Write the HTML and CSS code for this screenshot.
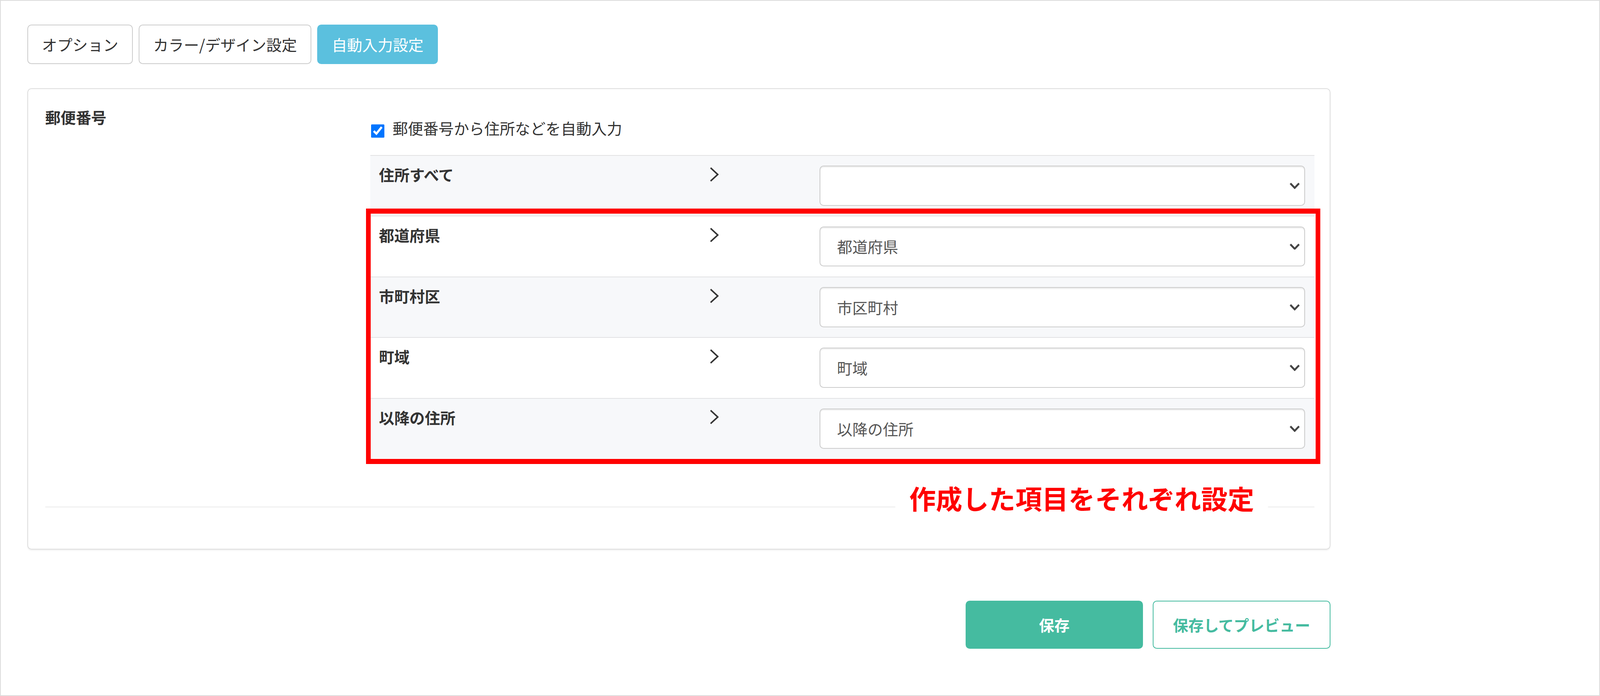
FILE: index.html
```html
<!DOCTYPE html>
<html lang="ja">
<head>
<meta charset="utf-8">
<title>自動入力設定</title>
<link rel="stylesheet" href="styles.css">
</head>
<body>
<div class="frame">
  <nav class="tabs">
    <button class="tab">オプション</button>
    <button class="tab">カラー/デザイン設定</button>
    <button class="tab tab-active">自動入力設定</button>
  </nav>

  <section class="card">
    <div class="field-label">郵便番号</div>
    <div class="field-body">
      <label class="check-line">
        <input type="checkbox" class="check" checked>
        <span>郵便番号から住所などを自動入力</span>
      </label>

      <div class="map-table">
        <div class="map-row odd">
          <div class="map-label">住所すべて</div>
          <div class="map-arrow"><svg class="chev" viewBox="0 0 9.5 14" preserveAspectRatio="none"><polyline points="1.2,1 8.2,7 1.2,13"/></svg></div>
          <div class="select-wrap">
            <select class="select"><option></option></select>
            <svg class="caret" viewBox="0 0 10.3 6" preserveAspectRatio="none"><polyline points="0.9,0.9 5.15,5 9.4,0.9"/></svg>
          </div>
        </div>

        <div class="map-group">
          <div class="map-row">
            <div class="map-label">都道府県</div>
            <div class="map-arrow"><svg class="chev" viewBox="0 0 9.5 14" preserveAspectRatio="none"><polyline points="1.2,1 8.2,7 1.2,13"/></svg></div>
            <div class="select-wrap">
              <select class="select"><option>都道府県</option></select>
              <svg class="caret" viewBox="0 0 10.3 6" preserveAspectRatio="none"><polyline points="0.9,0.9 5.15,5 9.4,0.9"/></svg>
            </div>
          </div>
          <div class="map-row odd">
            <div class="map-label">市町村区</div>
            <div class="map-arrow"><svg class="chev" viewBox="0 0 9.5 14" preserveAspectRatio="none"><polyline points="1.2,1 8.2,7 1.2,13"/></svg></div>
            <div class="select-wrap">
              <select class="select"><option>市区町村</option></select>
              <svg class="caret" viewBox="0 0 10.3 6" preserveAspectRatio="none"><polyline points="0.9,0.9 5.15,5 9.4,0.9"/></svg>
            </div>
          </div>
          <div class="map-row">
            <div class="map-label">町域</div>
            <div class="map-arrow"><svg class="chev" viewBox="0 0 9.5 14" preserveAspectRatio="none"><polyline points="1.2,1 8.2,7 1.2,13"/></svg></div>
            <div class="select-wrap">
              <select class="select"><option>町域</option></select>
              <svg class="caret" viewBox="0 0 10.3 6" preserveAspectRatio="none"><polyline points="0.9,0.9 5.15,5 9.4,0.9"/></svg>
            </div>
          </div>
          <div class="map-row odd">
            <div class="map-label">以降の住所</div>
            <div class="map-arrow"><svg class="chev" viewBox="0 0 9.5 14" preserveAspectRatio="none"><polyline points="1.2,1 8.2,7 1.2,13"/></svg></div>
            <div class="select-wrap">
              <select class="select"><option>以降の住所</option></select>
              <svg class="caret" viewBox="0 0 10.3 6" preserveAspectRatio="none"><polyline points="0.9,0.9 5.15,5 9.4,0.9"/></svg>
            </div>
          </div>
          <div class="highlight"></div>
        </div>
      </div>
    </div>

    <div class="divider">
      <span class="note">作成した項目をそれぞれ設定</span>
    </div>
  </section>

  <div class="actions">
    <button class="btn btn-save">保存</button>
    <button class="btn btn-preview">保存してプレビュー</button>
  </div>
</div>
</body>
</html>
```

FILE: styles.css
```css
/* design units: 1/1568 of the viewport width, 1/633.9 of its height */
:root {
  --hu: calc(100vw / 1568);
  --vu: calc(100vh / 633.9);
}

html {
  background: #ffffff;
  overflow: hidden;
}

body {
  margin: 0;
  font-family: "Noto Sans CJK JP", "Noto Sans", sans-serif;
  font-size: calc(15 * var(--hu));
  line-height: calc(22.5 * var(--vu));
  color: #333333;
}

.frame {
  box-sizing: border-box;
  height: 100vh;
  border-style: solid;
  border-color: #dcdcdc;
  border-width: var(--vu) var(--hu);
  padding: calc(21.8 * var(--vu)) 0 0 calc(26 * var(--hu));
}

/* tabs */
.tabs {
  display: flex;
  gap: calc(5.6 * var(--hu));
}

.tab {
  font-family: inherit;
  font-size: calc(15 * var(--hu));
  line-height: calc(22.5 * var(--vu));
  color: #333333;
  background: #ffffff;
  border-style: solid;
  border-color: #cccccc;
  border-width: var(--vu) var(--hu);
  border-radius: calc(4 * var(--hu));
  padding: calc(6 * var(--vu)) calc(13.5 * var(--hu));
  margin: 0;
}

.tab-active {
  background: #5bc0de;
  border-color: #5bc0de;
  color: #ffffff;
}

/* card */
.card {
  box-sizing: border-box;
  width: calc(1277 * var(--hu));
  margin-top: calc(22.1 * var(--vu));
  border-style: solid;
  border-color: #dddddd;
  border-width: var(--vu) var(--hu);
  border-radius: calc(4 * var(--hu));
  box-shadow: 0 var(--vu) var(--vu) rgba(0, 0, 0, 0.05);
  padding: calc(14 * var(--vu)) calc(15 * var(--hu)) calc(37.6 * var(--vu)) calc(16.8 * var(--hu));
  display: grid;
  grid-template-columns: calc(318.4 * var(--hu)) 1fr;
}

.field-label {
  font-weight: bold;
  color: #333333;
}

.field-body {
  padding-top: calc(10 * var(--vu));
}

.check-line {
  display: flex;
  align-items: flex-start;
  gap: calc(8 * var(--hu));
  padding-left: var(--hu);
}

.check {
  width: calc(13 * var(--hu));
  height: calc(13 * var(--vu));
  margin: calc(7.6 * var(--vu)) 0 0 0;
}

.map-table {
  margin-top: calc(13.4 * var(--vu));
}

.map-group {
  position: relative;
}

.map-row {
  display: grid;
  grid-template-columns: calc(323.7 * var(--hu)) calc(108.1 * var(--hu)) 1fr;
  align-items: start;
  border-top: var(--vu) solid #e2e2e4;
  padding: 0 calc(8.9 * var(--hu)) 0 calc(8.6 * var(--hu));
  background: #ffffff;
}

.map-row.odd {
  background: #f7f8fa;
}

.map-label {
  font-weight: bold;
  color: #333333;
  padding-top: calc(5.7 * var(--vu));
}

.map-arrow {
  padding-top: calc(9.9 * var(--vu));
  height: calc(14 * var(--vu));
}

.chev {
  display: block;
  width: calc(9.5 * var(--hu));
  height: calc(14 * var(--vu));
  fill: none;
  stroke: #333333;
  stroke-width: 1.4;
}

.select-wrap {
  position: relative;
  margin: calc(9 * var(--vu)) 0;
}

.select {
  appearance: none;
  -webkit-appearance: none;
  display: block;
  box-sizing: border-box;
  width: 100%;
  height: calc(36.6 * var(--vu));
  margin: 0;
  padding: 0 calc(24 * var(--hu)) 0 calc(16.4 * var(--hu));
  font-family: inherit;
  font-size: calc(15 * var(--hu));
  line-height: calc(22.5 * var(--vu));
  color: #555555;
  background: #ffffff;
  border-style: solid;
  border-color: #cccccc;
  border-width: var(--vu) var(--hu);
  border-radius: calc(4 * var(--hu));
  box-shadow: inset 0 var(--vu) var(--vu) rgba(0, 0, 0, 0.075);
}

.caret {
  position: absolute;
  right: calc(5 * var(--hu));
  top: calc(15.3 * var(--vu));
  width: calc(10.3 * var(--hu));
  height: calc(6 * var(--vu));
  fill: none;
  stroke: #444444;
  stroke-width: 1.8;
  pointer-events: none;
}

.highlight {
  position: absolute;
  top: calc(-6.4 * var(--vu));
  left: calc(-3.9 * var(--hu));
  right: calc(-6 * var(--hu));
  bottom: calc(-4.8 * var(--vu));
  border-style: solid;
  border-color: #ff0000;
  border-width: calc(4.8 * var(--vu)) calc(4.8 * var(--hu));
  pointer-events: none;
}

/* divider with annotation */
.divider {
  grid-column: 1 / -1;
  position: relative;
  height: var(--vu);
  margin-top: calc(43.6 * var(--vu));
  background: #ebebeb;
}

.note {
  position: absolute;
  left: calc(833.2 * var(--hu));
  top: calc(-23.2 * var(--vu));
  padding: 0 calc(13.6 * var(--hu));
  background: #ffffff;
  color: #ff0000;
  font-size: calc(26 * var(--hu));
  line-height: calc(31.2 * var(--vu));
  font-weight: bold;
  white-space: nowrap;
}

/* action buttons */
.actions {
  width: calc(1277 * var(--hu));
  display: flex;
  justify-content: flex-end;
  gap: calc(9.6 * var(--hu));
  margin-top: calc(46.5 * var(--vu));
}

.btn {
  box-sizing: border-box;
  width: calc(174 * var(--hu));
  height: calc(43.7 * var(--vu));
  margin: 0;
  padding: 0;
  font-family: inherit;
  font-size: calc(15 * var(--hu));
  font-weight: bold;
  border-style: solid;
  border-color: #45bba0;
  border-width: var(--vu) var(--hu);
  border-radius: calc(4 * var(--hu));
}

.btn-save {
  background: #45bba0;
  color: #ffffff;
}

.btn-preview {
  background: #ffffff;
  color: #45bba0;
}
```
